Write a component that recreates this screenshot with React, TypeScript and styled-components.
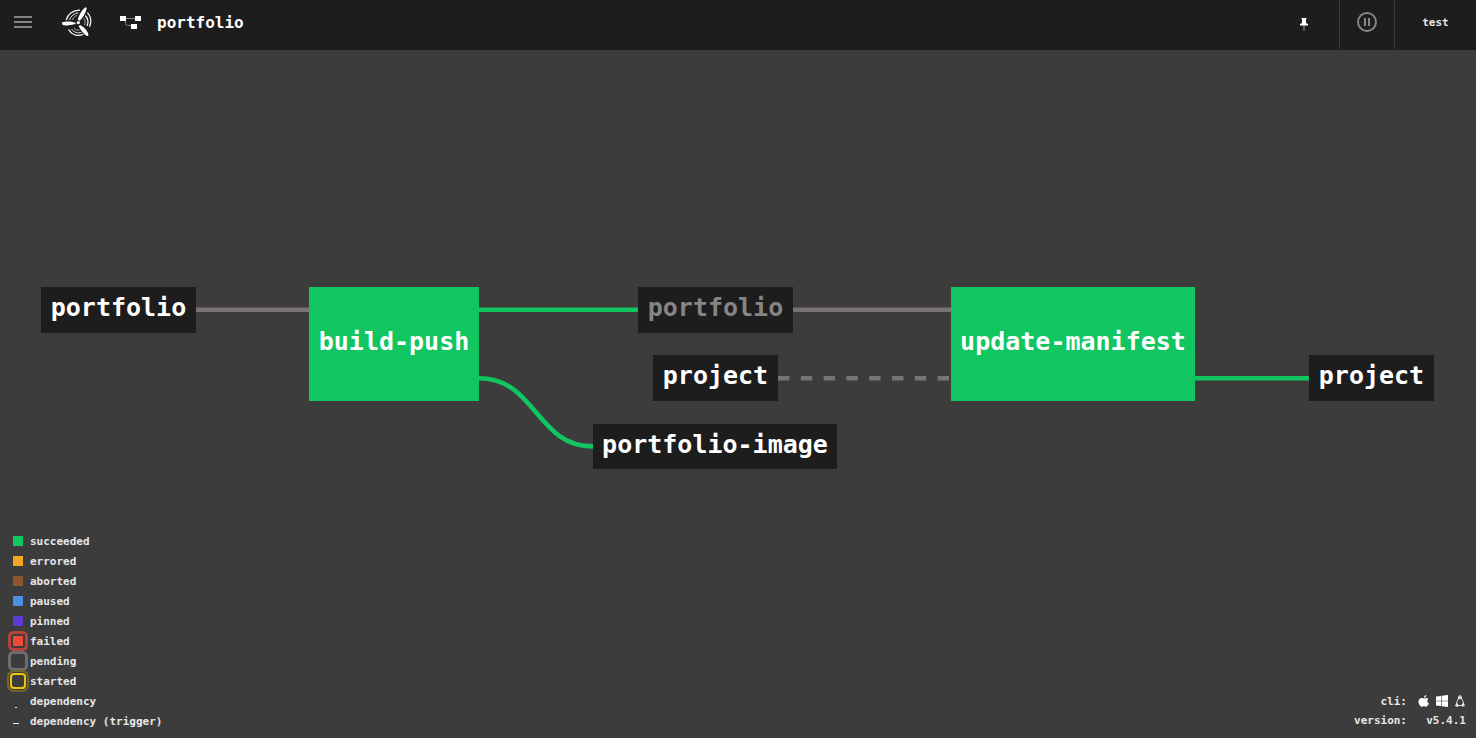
import React from "react";
import styled, { createGlobalStyle } from "styled-components";

const GlobalStyle = createGlobalStyle`
  *, *::before, *::after { box-sizing: border-box; }
  body {
    margin: 0;
    background: #3d3c3c;
    color: #e6e7e8;
    font-family: "DejaVu Sans Mono", "Liberation Mono", monospace;
    font-weight: 700;
    font-size: 11px;
  }
  a { color: inherit; text-decoration: none; }
  button { font: inherit; color: inherit; border: 0; background: none; padding: 0; cursor: pointer; }
  svg { display: block; }
`;

const Page = styled.div`
  position: relative;
  display: flex;
  flex-direction: column;
  min-height: 100vh;
`;

const TopBar = styled.header`
  display: flex;
  justify-content: space-between;
  height: 50px;
  padding-bottom: 1px;
  background: #1e1d1d;
`;

const BarGroup = styled.div`
  display: flex;
  align-items: stretch;
`;

const MenuButton = styled.button`
  display: flex;
  align-items: center;
  padding: 0 13px 5px;
`;

const LogoLink = styled.a`
  display: flex;
  align-items: center;
  padding: 0 12px 3px 14px;
`;

const Breadcrumb = styled.a`
  display: flex;
  align-items: center;
  gap: 16px;
  padding: 0 16px 4px;
  font-size: 16px;
  color: #fff;
`;

const BarButton = styled.button<{ $divided?: boolean; $width: number }>`
  display: flex;
  align-items: center;
  justify-content: center;
  width: ${(p) => p.$width}px;
  padding-bottom: 5px;
  border-left: 1px solid ${(p) => (p.$divided ? "#3d3c3c" : "transparent")};
`;

const Canvas = styled.main`
  flex: 1;
  display: flex;
  align-items: center;
  justify-content: center;
  padding-bottom: 32px;
`;

const Graph = styled.div`
  position: relative;
  flex: none;
  width: 1394px;
  height: 182px;
`;

const Edges = styled.svg`
  position: absolute;
  inset: 0;
  width: 100%;
  height: 100%;
  fill: none;
  stroke-width: 4.600;
`;

type NodeKind = "job" | "input" | "output";

const GraphNode = styled.a<{ $x: number; $y: number; $w: number; $h: number; $kind: NodeKind }>`
  position: absolute;
  left: ${(p) => p.$x}px;
  top: ${(p) => p.$y}px;
  width: ${(p) => p.$w}px;
  height: ${(p) => p.$h}px;
  display: flex;
  align-items: center;
  justify-content: center;
  padding-bottom: 5px;
  font-size: 25px;
  white-space: nowrap;
  color: ${(p) => (p.$kind === "output" ? "#868585" : "#fff")};
  background: ${(p) => (p.$kind === "job" ? "#11c560" : "#1e1d1d")};
`;

const Legend = styled.ul`
  position: absolute;
  left: 12px;
  bottom: 7px;
  margin: 0;
  padding: 0;
  list-style: none;
`;

const LegendItem = styled.li`
  display: flex;
  align-items: center;
  gap: 6px;
  height: 20px;
`;

const Marker = styled.svg`
  flex: none;
  width: 12px;
  height: 20px;
  overflow: visible;
`;

const BuildInfo = styled.dl`
  position: absolute;
  right: 10px;
  bottom: 7px;
  display: grid;
  grid-template-columns: auto 48px;
  column-gap: 11px;
  margin: 0;
  line-height: 20px;
  text-align: right;
`;

const Term = styled.dt`
  margin: 0;
`;

const CliTerm = styled(Term)`
  padding-top: 2px;
  line-height: 18px;
`;

const Detail = styled.dd`
  display: flex;
  align-items: center;
  justify-content: space-between;
  margin: 0;
  white-space: nowrap;
`;

const Version = styled(Detail)`
  justify-content: flex-end;
`;

const nodes: { label: string; x: number; y: number; w: number; h: number; kind: NodeKind }[] = [
  { label: "portfolio", x: 0, y: 0, w: 155, h: 46, kind: "input" },
  { label: "build-push", x: 268, y: 0, w: 170, h: 114, kind: "job" },
  { label: "portfolio", x: 597, y: 0, w: 155, h: 46, kind: "output" },
  { label: "project", x: 612, y: 68, w: 125, h: 46, kind: "input" },
  { label: "portfolio-image", x: 552, y: 137, w: 244, h: 45, kind: "input" },
  { label: "update-manifest", x: 910, y: 0, w: 244, h: 114, kind: "job" },
  { label: "project", x: 1268, y: 68, w: 125, h: 46, kind: "input" },
];

const swatches = [
  { label: "succeeded", color: "#11c560" },
  { label: "errored", color: "#f5a623" },
  { label: "aborted", color: "#8b572a" },
  { label: "paused", color: "#4a90e2" },
  { label: "pinned", color: "#5c3bd1" },
];

export default function App() {
  return (
    <>
      <GlobalStyle />
      <Page>
        <TopBar>
          <BarGroup>
            <MenuButton aria-label="Menu">
              <svg width="20" height="14" viewBox="0 0 20 14" fill="#868585">
                <path d="M1 1h18v2H1zM1 6h18v2H1zM1 11h18v2H1z" />
              </svg>
            </MenuButton>
            <LogoLink href="#home" aria-label="Home">
              <svg width="32" height="32" viewBox="0 0 32 32" fill="#fff">
                <path d="M25.500.2C26.800.2 26.900 1.500 26.300 3 25.200 6.500 23 10.500 19.700 13.800L17.800 12.700C18.800 8.500 21.500 3 25.500.2z" />
                <path d="M2.500 15.300C5 14.200 11 14.300 15.500 15.700L15.500 17C11 18.400 5 18.800 3 17.900 1.700 17.300 1.600 16 2.500 15.300z" />
                <path d="M20 18C23.500 19.700 26.800 23 28.200 26.500 28.700 28.500 28 29.500 26.800 28.900 23.500 27 20.500 23 18.700 19.200z" />
                <circle cx="18.300" cy="15.600" r="1.700" />
                <g fill="none" stroke="#fff">
                  <path d="M6.300 13C7.500 7.500 12.500 3 20 3.200" strokeWidth="1.200" />
                  <path d="M9.500 13C10.800 9 14 6.300 18.500 5.800" strokeWidth=".9" />
                  <path d="M12.300 13.200C13.200 10.500 15 9 17.200 8.500" strokeWidth=".6" />
                  <path d="M27.300 5.700C31 9.500 31.700 14.500 29.500 19.700" strokeWidth="1.200" />
                  <path d="M25.300 8.500C28 11.500 28.700 15.300 27 19" strokeWidth="1.200" />
                  <path d="M23.500 10.800C25.200 13 25.500 15.500 24.500 18" strokeWidth=".6" />
                  <path d="M8.500 22.500C12 28.200 18 29.800 23.300 27.300" strokeWidth="1.200" />
                  <path d="M11.500 22C14 25.500 18 26.700 21.500 25.200" strokeWidth=".9" />
                  <path d="M14 21C15.500 23 17.500 23.700 19.500 23" strokeWidth=".6" />
                </g>
              </svg>
            </LogoLink>
            <Breadcrumb href="#portfolio">
              <svg width="21" height="13" viewBox="0 0 21 13" fill="#fff">
                <path d="M3 2.500H18M5.500 3V7.500Q5.500 9.500 7.500 9.500H12" fill="none" stroke="#868585" />
                <path d="M0 0h6v5H0zM15 0h6v5h-6zM11 8h6v5h-6z" />
              </svg>
              portfolio
            </Breadcrumb>
          </BarGroup>
          <BarGroup>
            <BarButton $width={71} aria-label="Pin">
              <svg width="10" height="20" viewBox="0 0 10 20">
                <path d="M4 13h2v6H4z" fill="#5b5a5a" />
                <path d="M2.500 6h5v1L7 7.500V11l2 1v1.500H1V12l2-1V7.500L2.500 7z" fill="#fff" />
              </svg>
            </BarButton>
            <BarButton $width={55} $divided aria-label="Pause pipeline">
              <svg width="20" height="20" viewBox="0 0 20 20" fill="#868585">
                <circle cx="10" cy="10" r="9" fill="none" stroke="#868585" strokeWidth="2" />
                <path d="M7 6h2v8H7zM11 6h2v8h-2z" />
              </svg>
            </BarButton>
            <BarButton $width={82} $divided>
              <span>test</span>
            </BarButton>
          </BarGroup>
        </TopBar>

        <Canvas>
          <Graph>
            <Edges viewBox="0 0 1394 182">
              <g stroke="#7a7373">
                <path d="M155 22.700H268M752 22.700H910" />
                <path d="M737 91.300H910" strokeDasharray="11.400" />
              </g>
              <g stroke="#11c560">
                <path d="M438 22.700H597M1154 91.300H1268" />
                <path d="M438 91.300C495 91.300 495 159.400 552 159.400" />
              </g>
            </Edges>
            {nodes.map((n, i) => (
              <GraphNode key={i} href={`#${n.label}`} $x={n.x} $y={n.y} $w={n.w} $h={n.h} $kind={n.kind}>
                {n.label}
              </GraphNode>
            ))}
          </Graph>
        </Canvas>

        <Legend>
          {swatches.map((s) => (
            <LegendItem key={s.label}>
              <Marker viewBox="0 0 12 20">
                <path d="M1 5h10v10H1z" fill={s.color} />
              </Marker>
              {s.label}
            </LegendItem>
          ))}
          <LegendItem>
            <Marker viewBox="0 0 12 20">
              <path d="M1 5h10v10H1z" fill="#ed4b35" />
              <rect x="-2.500" y="1.500" width="17" height="17" rx="4" fill="none" stroke="#b3443b" strokeWidth="3" />
            </Marker>
            failed
          </LegendItem>
          <LegendItem>
            <Marker viewBox="0 0 12 20">
              <rect x="-2.500" y="1.500" width="17" height="17" rx="4" fill="none" stroke="#6e6d6d" strokeWidth="3" />
            </Marker>
            pending
          </LegendItem>
          <LegendItem>
            <Marker viewBox="0 0 12 20" fill="none">
              <rect x="-4" y="0" width="20" height="20" rx="6" stroke="#75652c" strokeWidth="2" />
              <rect x="-1" y="3" width="14" height="14" rx="3" stroke="#f1c40f" strokeWidth="2" />
            </Marker>
            started
          </LegendItem>
          <LegendItem>
            <Marker viewBox="0 0 12 20">
              <path d="M3 16h2v1H3z" fill="#e6e7e8" />
            </Marker>
            dependency
          </LegendItem>
          <LegendItem>
            <Marker viewBox="0 0 12 20">
              <path d="M1 12h6v1H1z" fill="#e6e7e8" />
            </Marker>
            dependency (trigger)
          </LegendItem>
        </Legend>

        <BuildInfo>
          <CliTerm>cli:</CliTerm>
          <Detail>
            <a href="#darwin" aria-label="macOS">
              <svg width="12" height="12" viewBox="0 0 12 12" fill="#fff">
                <path d="M8.300 0C8.400 1.500 7.300 2.700 6 2.700 5.900 1.300 7 .2 8.300 0zM10.300 4.200C8.700 5.300 9 7.600 10.900 8.300 10.300 10 9.300 11.700 8.200 11.700 7.300 11.700 7 11.200 6 11.200S4.700 11.700 3.900 11.700C2.500 11.700.5 9 .5 6.700.5 4.300 2.200 3 4 3 5 3 5.600 3.500 6.200 3.500S7.500 3 8.400 3C9.100 3 9.900 3.400 10.300 4.200z" />
              </svg>
            </a>
            <a href="#windows" aria-label="Windows">
              <svg width="12" height="12" viewBox="0 0 12 12" fill="#fff">
                <path d="M0 1.500L5 .9V5.700H0zM5.600.8L12 0V5.700H5.600zM0 6.300H5V11.100L0 10.500zM5.600 6.300H12V12L5.600 11.200z" />
              </svg>
            </a>
            <a href="#linux" aria-label="Linux">
              <svg width="12" height="12" viewBox="0 0 12 12" fill="none" stroke="#e6e7e8">
                <path d="M4.500 3C4.300-.2 7.500-.2 7.500 3 7.500 4.500 9.500 6 9.500 8.500M4.500 3C4.500 4.500 2.700 6 2.700 8.500M4.600 10.500H7.500" />
                <path d="M4.500 1.500h3v1.500L6 4.500 4.500 3.500zM2.500 7.500L5 10.500 3.700 12 1 11zM9.300 7.500L11 10.500 8 12 7.500 9.500z" fill="#e6e7e8" stroke="none" />
              </svg>
            </a>
          </Detail>
          <Term>version:</Term>
          <Version>v5.4.1</Version>
        </BuildInfo>
      </Page>
    </>
  );
}
